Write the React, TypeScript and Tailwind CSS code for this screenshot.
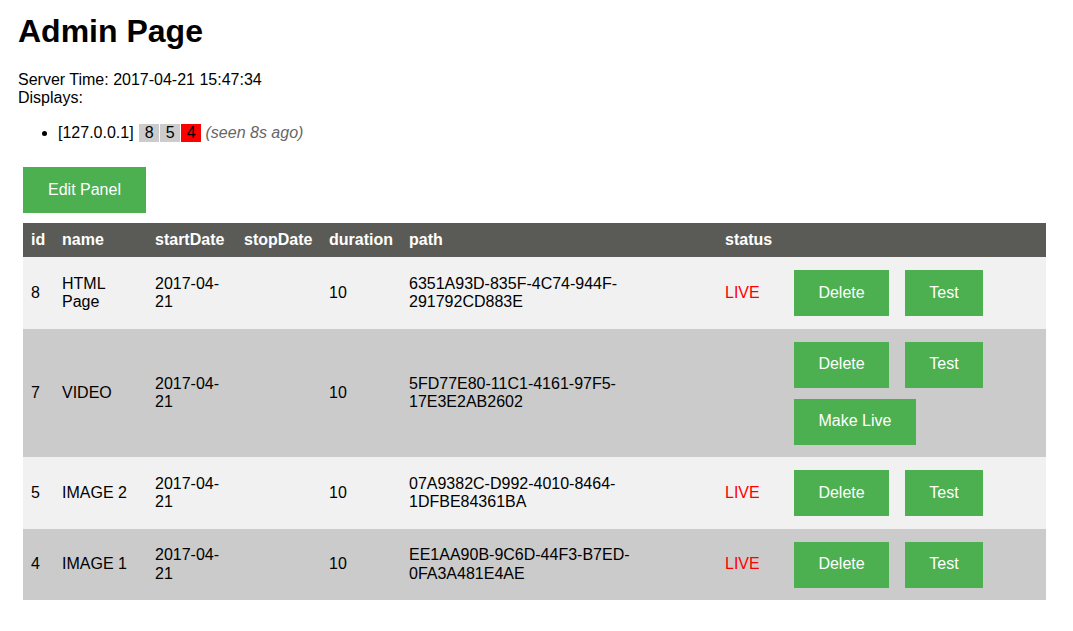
import React from "react";

type Row = {
  id: number;
  name: string;
  start: string;
  duration: number;
  path: string;
  live: boolean;
};

const rows: Row[] = [
  { id: 8, name: "HTML Page", start: "2017-04-21", duration: 10, path: "6351A93D-835F-4C74-944F-291792CD883E", live: true },
  { id: 7, name: "VIDEO", start: "2017-04-21", duration: 10, path: "5FD77E80-11C1-4161-97F5-17E3E2AB2602", live: false },
  { id: 5, name: "IMAGE 2", start: "2017-04-21", duration: 10, path: "07A9382C-D992-4010-8464-1DFBE84361BA", live: true },
  { id: 4, name: "IMAGE 1", start: "2017-04-21", duration: 10, path: "EE1AA90B-9C6D-44F3-B7ED-0FA3A481E4AE", live: true },
];

function Btn({ w, children }: { w: string; children: React.ReactNode }) {
  return (
    <button
      className={`${w} h-[46px] bg-[#4caf50] text-white text-[16px] leading-[1.15] flex items-center justify-center`}
    >
      {children}
    </button>
  );
}

export default function App() {
  return (
    <div className="font-['Liberation_Sans',Arial,sans-serif] text-[16px] leading-[1.15] text-black bg-white min-h-[631px] pl-[18px] pt-[13px]">
      <h1 className="text-[32px] font-bold leading-[1.15] m-0">Admin Page</h1>
      <div className="mt-[21px]">
        <div>Server Time: 2017-04-21 15:47:34</div>
        <div>Displays:</div>
      </div>
      <ul className="list-disc pl-[40px] mt-[16px] mb-0">
        <li>
          [127.0.0.1]{" "}
          <span className="inline-block w-[20px] text-center bg-[#cccccc] ml-[1px] mr-[1px]">8</span>
          <span className="inline-block w-[20px] text-center bg-[#cccccc] mr-[1px]">5</span>
          <span className="inline-block w-[20px] text-center bg-[#ff0000]">4</span>{" "}
          <i className="text-[#666666]">(seen 8s ago)</i>
        </li>
      </ul>
      <div className="ml-[5px] mt-[25px]">
        <button className="w-[123px] h-[46px] bg-[#4caf50] text-white text-[16px] flex items-center justify-center">
          Edit Panel
        </button>
        <table className="mt-[10px] w-[1023px] table-fixed border-collapse">
          <colgroup>
            <col className="w-[31px]" />
            <col className="w-[93px]" />
            <col className="w-[89px]" />
            <col className="w-[85px]" />
            <col className="w-[80px]" />
            <col className="w-[316px]" />
            <col className="w-[69px]" />
            <col className="w-[260px]" />
          </colgroup>
          <thead>
            <tr className="bg-[#5a5b57] text-white">
              <th className="text-left font-bold p-[8px] whitespace-nowrap">id</th>
              <th className="text-left font-bold p-[8px] whitespace-nowrap">name</th>
              <th className="text-left font-bold p-[8px] whitespace-nowrap">startDate</th>
              <th className="text-left font-bold p-[8px] whitespace-nowrap">stopDate</th>
              <th className="text-left font-bold p-[8px] whitespace-nowrap">duration</th>
              <th className="text-left font-bold p-[8px] whitespace-nowrap">path</th>
              <th className="text-left font-bold p-[8px] whitespace-nowrap">status</th>
              <th className="p-[8px]"></th>
            </tr>
          </thead>
          <tbody>
            {rows.map((r, i) => (
              <tr key={r.id} className={i % 2 === 0 ? "bg-[#f1f1f1]" : "bg-[#cbcbcb]"}>
                <td className="p-[8px] align-middle">{r.id}</td>
                <td className="p-[8px] align-middle">{r.name}</td>
                <td className="p-[8px] align-middle">{r.start}</td>
                <td className="p-[8px] align-middle"></td>
                <td className="p-[8px] align-middle">{r.duration}</td>
                <td className="p-[8px] align-middle">{r.path}</td>
                <td className="p-[8px] align-middle text-[#ff0000]">{r.live ? "LIVE" : ""}</td>
                <td className="p-[8px] align-middle">
                  <div className="flex flex-wrap gap-x-[16px] gap-y-[11px] py-[4.75px]">
                    <Btn w="w-[95px]">Delete</Btn>
                    <Btn w="w-[78px]">Test</Btn>
                    {!r.live && <Btn w="w-[122px]">Make Live</Btn>}
                  </div>
                </td>
              </tr>
            ))}
          </tbody>
        </table>
      </div>
    </div>
  );
}
